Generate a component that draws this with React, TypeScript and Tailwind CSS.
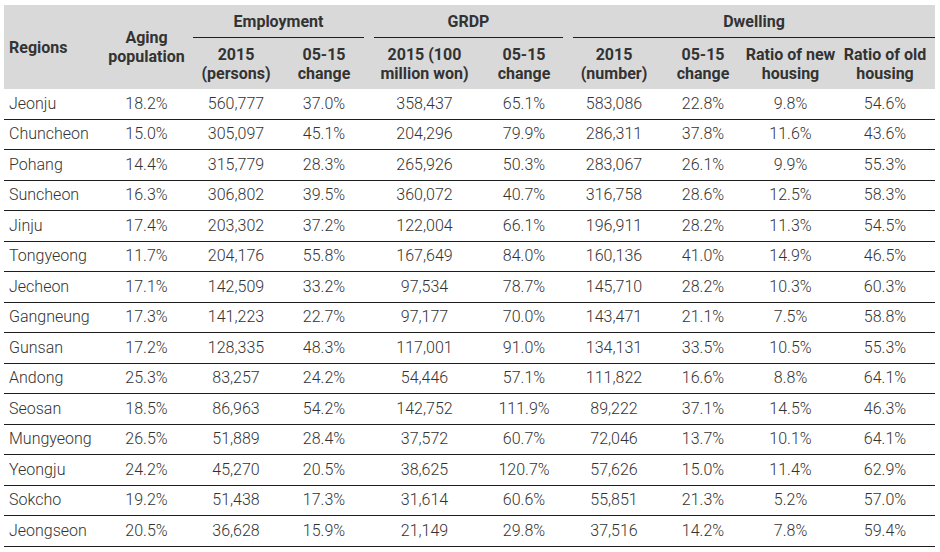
const cols = 'grid-cols-[96px_93px_86px_90px_111px_88px_92px_86px_89px_100px]';

const rows: string[][] = [
    ['Jeonju', '18.2%', '560,777', '37.0%', '358,437', '65.1%', '583,086', '22.8%', '9.8%', '54.6%'],
    ['Chuncheon', '15.0%', '305,097', '45.1%', '204,296', '79.9%', '286,311', '37.8%', '11.6%', '43.6%'],
    ['Pohang', '14.4%', '315,779', '28.3%', '265,926', '50.3%', '283,067', '26.1%', '9.9%', '55.3%'],
    ['Suncheon', '16.3%', '306,802', '39.5%', '360,072', '40.7%', '316,758', '28.6%', '12.5%', '58.3%'],
    ['Jinju', '17.4%', '203,302', '37.2%', '122,004', '66.1%', '196,911', '28.2%', '11.3%', '54.5%'],
    ['Tongyeong', '11.7%', '204,176', '55.8%', '167,649', '84.0%', '160,136', '41.0%', '14.9%', '46.5%'],
    ['Jecheon', '17.1%', '142,509', '33.2%', '97,534', '78.7%', '145,710', '28.2%', '10.3%', '60.3%'],
    ['Gangneung', '17.3%', '141,223', '22.7%', '97,177', '70.0%', '143,471', '21.1%', '7.5%', '58.8%'],
    ['Gunsan', '17.2%', '128,335', '48.3%', '117,001', '91.0%', '134,131', '33.5%', '10.5%', '55.3%'],
    ['Andong', '25.3%', '83,257', '24.2%', '54,446', '57.1%', '111,822', '16.6%', '8.8%', '64.1%'],
    ['Seosan', '18.5%', '86,963', '54.2%', '142,752', '111.9%', '89,222', '37.1%', '14.5%', '46.3%'],
    ['Mungyeong', '26.5%', '51,889', '28.4%', '37,572', '60.7%', '72,046', '13.7%', '10.1%', '64.1%'],
    ['Yeongju', '24.2%', '45,270', '20.5%', '38,625', '120.7%', '57,626', '15.0%', '11.4%', '62.9%'],
    ['Sokcho', '19.2%', '51,438', '17.3%', '31,614', '60.6%', '55,851', '21.3%', '5.2%', '57.0%'],
    ['Jeongseon', '20.5%', '36,628', '15.9%', '21,149', '29.8%', '37,516', '14.2%', '7.8%', '59.4%'],
];

const subHeads = [
    ['2015', '(persons)'],
    ['05-15', 'change'],
    ['2015 (100', 'million won)'],
    ['05-15', 'change'],
    ['2015', '(number)'],
    ['05-15', 'change'],
    ['Ratio of new', 'housing'],
    ['Ratio of old', 'housing'],
];

export default function App() {
    return (
        <div className="h-[552px] w-[940px] overflow-hidden bg-white text-[#333] text-[16px]" style={{ fontFamily: 'Roboto, "Liberation Sans", sans-serif' }}>
            <div className="ml-[4px] mt-[5px] w-[931px]">
                <div className={`grid ${cols} grid-rows-[33px_51px] bg-[#d9d9d9] font-bold leading-[19px] text-[#333]`}>
                    <div className="row-span-2 flex items-center pl-[5px]">Regions</div>
                    <div className="row-span-2 flex items-center justify-center text-center">
                        Aging
                        <br />
                        population
                    </div>
                    <div className="col-span-2 mr-[5px] flex items-center justify-center border-b border-[#1e1e1e]">Employment</div>
                    <div className="col-span-2 mx-[5px] flex items-center justify-center border-b border-[#1e1e1e]">GRDP</div>
                    <div className="col-span-4 ml-[5px] flex items-center justify-center border-b border-[#1e1e1e]">Dwelling</div>
                    {subHeads.map((s, i) => (
                        <div key={i} className="flex flex-col items-center justify-center whitespace-nowrap text-center">
                            <span>{s[0]}</span>
                            <span>{s[1]}</span>
                        </div>
                    ))}
                </div>
                {rows.map((r) => (
                    <div key={r[0]} className={`grid ${cols} h-[30.5px] items-center border-b border-[#1e1e1e] font-light`}>
                        {r.map((c, i) => (
                            <div key={i} className={i === 0 ? 'pl-[5px]' : 'text-center'}>
                                {c}
                            </div>
                        ))}
                    </div>
                ))}
            </div>
        </div>
    );
}
